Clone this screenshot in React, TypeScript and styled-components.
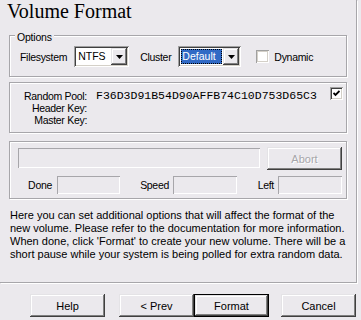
import styled, { createGlobalStyle, css } from 'styled-components'

const FACE = '#ebe9ed'
const LINE = '#a7a6aa'

const GlobalStyle = createGlobalStyle`
  html, body {
    margin: 0;
    padding: 0;
    background: ${FACE};
  }
  body {
    font-family: 'Liberation Sans', Arial, sans-serif;
    font-size: 11px;
    color: #000;
  }
  * {
    box-sizing: border-box;
  }
`

const Window = styled.div`
  width: 361px;
  height: 320px;
  background: ${FACE};
  overflow: hidden;
`

const Page = styled.div`
  width: 357px;
  height: 283px;
  padding: 0 9px;
  border-right: 1px solid ${LINE};
  border-bottom: 1px solid ${LINE};
  box-shadow: 1px 1px 0 #fff;
`

const Title = styled.h1`
  margin: 0 0 0 -2px;
  height: 22px;
  font-family: 'Liberation Serif', 'Times New Roman', serif;
  font-size: 20px;
  line-height: 22px;
  font-weight: normal;
`

const GroupBox = styled.div<{ $top: number; $pad: string }>`
  position: relative;
  margin-top: ${(p) => p.$top}px;
  padding: ${(p) => p.$pad};
  border: 1px solid ${LINE};
  box-shadow: inset 1px 1px 0 #fff, 1px 1px 0 #fff;
`

const Legend = styled.span`
  position: absolute;
  top: -5px;
  left: 5px;
  padding: 0 2px;
  background: ${FACE};
  font-size: 10.5px;
  letter-spacing: -0.2px;
  line-height: 13px;
`

const Label = styled.span<{ $ml?: number; $w?: number }>`
  flex: none;
  margin-left: ${(p) => p.$ml ?? 0}px;
  font-size: 10.5px;
  letter-spacing: -0.3px;
  white-space: nowrap;
  ${(p) =>
    p.$w !== undefined &&
    css`
      width: ${p.$w}px;
      text-align: right;
    `}
`

const OptionsRow = styled.div`
  display: flex;
  align-items: center;
  height: 21px;
  padding-left: 10px;
`

const Combo = styled.div<{ $w: number; $ml: number }>`
  display: flex;
  align-items: center;
  width: ${(p) => p.$w}px;
  height: 21px;
  margin-left: ${(p) => p.$ml}px;
  padding: 2px;
  background: #fff;
  box-shadow: inset 1px 1px 0 #a0a0a0, inset -1px -1px 0 #fff, inset 2px 2px 0 #404040,
    inset -2px -2px 0 #d4d0c8;
`

const ComboText = styled.span<{ $selected?: boolean }>`
  flex: 1;
  height: 15px;
  margin: 0 1px;
  padding-left: 1px;
  font-size: 10.5px;
  line-height: 15px;
  ${(p) =>
    p.$selected &&
    css`
      background: #316ac5;
      color: #fff;
      outline: 1px dotted #000;
      outline-offset: -1px;
    `}
`

const raised = css`
  background: ${FACE};
  box-shadow: inset -1px -1px 0 #404040, inset 1px 1px 0 #e4e3e6, inset -2px -2px 0 #808080,
    inset 2px 2px 0 #fff;
`

const ComboArrow = styled.div`
  ${raised};
  display: flex;
  align-items: center;
  justify-content: center;
  width: 16px;
  height: 17px;
`

const Check = styled.span<{ $checked?: boolean; $ml?: number }>`
  display: flex;
  flex: none;
  align-items: center;
  justify-content: center;
  width: 13px;
  height: 13px;
  margin-left: ${(p) => p.$ml ?? 0}px;
  background: #fff;
  box-shadow: inset 1px 1px 0 #a0a0a0, inset -1px -1px 0 #fff,
    inset 2px 2px 0 ${(p) => (p.$checked ? '#404040' : '#d4d0c8')}, inset -2px -2px 0 #d4d0c8;
`

const PoolGrid = styled.div`
  display: grid;
  grid-template-columns: 77px 1fr 13px;
  grid-auto-rows: 12px;
  column-gap: 9px;
  line-height: 12px;
`

const KeyLabel = styled.span`
  text-align: right;
  font-size: 10.5px;
  letter-spacing: -0.3px;
  white-space: nowrap;
`

const Hex = styled.span`
  font-family: 'Liberation Mono', 'Courier New', monospace;
  font-size: 11.5px;
  white-space: nowrap;
`

const PoolCheck = styled(Check)`
  margin-top: -3px;
`

const ProgressTop = styled.div`
  display: flex;
  align-items: flex-start;
  gap: 7px;
  height: 23px;
  padding: 0 4px 0 8px;
`

const sunken = css`
  background: ${FACE};
  box-shadow: inset 1px 1px 0 ${LINE}, inset -1px -1px 0 #fff;
`

const ProgressBar = styled.div`
  ${sunken};
  flex: 1;
  height: 20px;
  margin-top: 1px;
`

const StatRow = styled.div`
  display: flex;
  align-items: center;
  height: 18px;
  margin-top: 6px;
  padding-left: 8px;
`

const StatField = styled.div<{ $w: number; $ml?: number }>`
  ${sunken};
  flex: none;
  width: ${(p) => p.$w}px;
  height: 18px;
  margin-left: ${(p) => p.$ml ?? 4}px;
`

const Description = styled.p`
  margin: 10px 0 0 1px;
  font-size: 11px;
  line-height: 13px;
  white-space: nowrap;
`

const Footer = styled.div`
  display: flex;
  padding: 11px 0 0 30px;
`

const Button = styled.button<{ $ml?: number; $default?: boolean }>`
  ${raised};
  width: 75px;
  height: 23px;
  margin: 0 0 0 ${(p) => p.$ml ?? 0}px;
  padding: 0;
  border: ${(p) => (p.$default ? '1px solid #000' : 'none')};
  font-family: 'Liberation Sans', Arial, sans-serif;
  font-size: 11px;
  color: #000;
  &:disabled {
    color: #a7a6aa;
    text-shadow: 1px 1px 0 #fff;
  }
`

const DownArrow = () => (
  <svg width="7" height="4" viewBox="0 0 7 4">
    <polygon points="0,0 7,0 3.5,4" fill="#000" />
  </svg>
)

const CheckMark = () => (
  <svg width="7" height="7" viewBox="0 0 7 7">
    <polyline points="0.5,3 2.5,5 6.5,1" fill="none" stroke="#000" strokeWidth="1.8" />
  </svg>
)

export default function App() {
  return (
    <Window>
      <GlobalStyle />
      <Page>
        <Title>Volume Format</Title>

        <GroupBox $top={13} $pad="10px 0 9px 0">
          <Legend>Options</Legend>
          <OptionsRow>
            <Label>Filesystem</Label>
            <Combo $w={55} $ml={7}>
              <ComboText>NTFS</ComboText>
              <ComboArrow>
                <DownArrow />
              </ComboArrow>
            </Combo>
            <Label $ml={11}>Cluster</Label>
            <Combo $w={63} $ml={7}>
              <ComboText $selected>Default</ComboText>
              <ComboArrow>
                <DownArrow />
              </ComboArrow>
            </Combo>
            <Check $ml={15} />
            <Label $ml={5}>Dynamic</Label>
          </OptionsRow>
        </GroupBox>

        <GroupBox $top={5} $pad="7px 3px 6px 0">
          <PoolGrid>
            <KeyLabel>Random Pool:</KeyLabel>
            <Hex>F36D3D91B54D90AFFB74C10D753D65C3</Hex>
            <PoolCheck $checked>
              <CheckMark />
            </PoolCheck>
            <KeyLabel>Header Key:</KeyLabel>
            <span />
            <span />
            <KeyLabel>Master Key:</KeyLabel>
            <span />
            <span />
          </PoolGrid>
        </GroupBox>

        <GroupBox $top={8} $pad="5px 0 4px 0">
          <ProgressTop>
            <ProgressBar />
            <Button disabled>Abort</Button>
          </ProgressTop>
          <StatRow>
            <Label $w={34}>Done</Label>
            <StatField $w={63} $ml={5} />
            <Label $w={49}>Speed</Label>
            <StatField $w={64} />
            <Label $w={37}>Left</Label>
            <StatField $w={64} />
          </StatRow>
        </GroupBox>

        <Description>
          Here you can set additional options that will affect the format of the
          <br />
          new volume. Please refer to the documentation for more information.
          <br />
          When done, click 'Format' to create your new volume. There will be a
          <br />
          short pause while your system is being polled for extra random data.
        </Description>
      </Page>

      <Footer>
        <Button>Help</Button>
        <Button $ml={14}>&lt; Prev</Button>
        <Button $default>Format</Button>
        <Button $ml={12}>Cancel</Button>
      </Footer>
    </Window>
  )
}
